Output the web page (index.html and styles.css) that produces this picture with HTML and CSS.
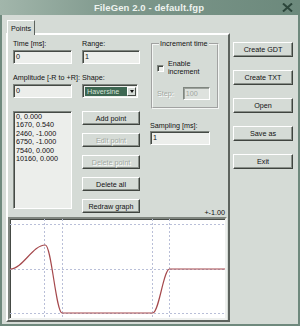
FILE: index.html
```html
<!DOCTYPE html>
<html lang="en">
<head>
  <meta charset="UTF-8" />
  <title>FileGen 2.0 - default.fgp</title>
  <link rel="stylesheet" href="styles.css">
</head>
<body>

<div class="window">
  <div class="titlebar">
    <span class="title">FileGen 2.0 - default.fgp</span>
    <svg class="close" width="11" height="9" viewBox="0 0 11 9">
      <path d="M1 0.5 L10 8.5 M10 0.5 L1 8.5" stroke="#2c463b" stroke-width="2" fill="none" />
    </svg>
  </div>

  <div class="client">
    <div class="tabs">
      <div class="tab">Points</div>
      <div class="panel">
        <div class="form">
          <div class="col">
            <label>Time [ms]:</label>
            <div class="edit">0</div>
            <label class="next">Amplitude [-R to +R]:</label>
            <div class="edit">0</div>
            <div class="list">
              <div>0, 0.000</div>
              <div>1670, 0.540</div>
              <div>2460, -1.000</div>
              <div>6750, -1.000</div>
              <div>7540, 0.000</div>
              <div>10160, 0.000</div>
            </div>
          </div>

          <div class="col">
            <label>Range:</label>
            <div class="edit">1</div>
            <label class="next">Shape:</label>
            <div class="combo">
              <span class="combo-value">Haversine</span>
              <span class="combo-arrow"></span>
            </div>
            <div class="actions">
              <button class="btn">Add point</button>
              <button class="btn" disabled>Edit point</button>
              <button class="btn" disabled>Delete point</button>
              <button class="btn">Delete all</button>
              <button class="btn">Redraw graph</button>
            </div>
          </div>

          <div class="col col-right">
            <fieldset class="group">
              <legend>Increment time</legend>
              <div class="check-row">
                <span class="check"></span>
                <span class="check-label">Enable<br>increment</span>
              </div>
              <div class="step-row">
                <span class="muted">Step:</span>
                <div class="edit edit-off">100</div>
              </div>
            </fieldset>
            <label class="sampling">Sampling [ms]:</label>
            <div class="edit edit-wide">1</div>
            <div class="scale">+-1.00</div>
          </div>
        </div>

        <div class="graph">
          <svg width="215" height="99" viewBox="0 0 215 99">
            <g stroke="#b9bfd8" stroke-width="1" stroke-dasharray="2 2" fill="none">
              <path d="M0 5.5 H215 M0 50.5 H215 M0 94.5 H215" />
              <path d="M34.5 0 V99 M52.5 0 V99 M142.5 0 V99 M159.5 0 V99" />
            </g>
            <path d="M0 50 C12.9 50 22.4 26 35.3 26 C41.4 26 46 94 52.1 94 L142.8 94 C148.9 94 153.5 50 159.6 50 L215 50"
                  stroke="#a5484c" stroke-width="1.2" fill="none" />
          </svg>
        </div>
      </div>
    </div>

    <div class="side">
      <button class="btn">Create GDT</button>
      <button class="btn">Create TXT</button>
      <button class="btn">Open</button>
      <button class="btn">Save as</button>
      <button class="btn">Exit</button>
    </div>
  </div>
</div>

</body>
</html>
```

FILE: styles.css
```css
html, body {
  margin: 0;
  background: #d5dbd6;
}
body {
  font-family: 'Liberation Sans', Arial, sans-serif;
  font-size: 7.2px;
  color: #111;
}
.window {
  width: 300px;
  height: 326px;
  box-sizing: border-box;
  background: #d5dbd6;
  border: 2px solid #6f897d;
  border-top: none;
  display: flex;
  flex-direction: column;
}
.titlebar {
  height: 15px;
  margin: 0 -2px;
  display: flex;
  align-items: center;
  padding: 0 7px 0 16px;
  background: linear-gradient(to right, #a2b6ab, #7d978b 40%, #6c897c);
  color: #eef3ef;
}
.title {
  flex: 1;
  text-align: center;
  font-weight: bold;
  font-size: 9.5px;
  letter-spacing: 0.1px;
}
.close { display: block; }

.client {
  flex: 1;
  display: flex;
  padding: 5px 0 0 4px;
}
.tabs {
  width: 224px;
  display: flex;
  flex-direction: column;
}
.tab {
  align-self: flex-start;
  position: relative;
  z-index: 1;
  margin: 0 0 -2px 1px;
  height: 15px;
  width: 28px;
  box-sizing: border-box;
  padding-top: 3px;
  text-align: center;
  background: #d5dbd6;
  border-top: 1px solid #fff;
  border-left: 1px solid #fff;
  border-right: 1px solid #5d635e;
}
.panel {
  height: 289px;
  box-sizing: border-box;
  border: 2px solid;
  border-color: #fff #5d635e #5d635e #fff;
  display: flex;
  flex-direction: column;
}

.form {
  display: grid;
  grid-template-columns: 59px 58px 1fr;
  column-gap: 10px;
  padding: 4px 0 0 5px;
}
.col {
  display: flex;
  flex-direction: column;
}
label, .scale, legend {
  display: block;
  line-height: 9px;
  height: 9px;
  white-space: nowrap;
}
.next { margin-top: 9px; }

.edit {
  height: 14px;
  margin-top: 2px;
  box-sizing: border-box;
  padding: 1px 0 0 2px;
  line-height: 10px;
  background: #eceeeb;
  border: 1px solid;
  border-color: #7f857f #fff #fff #7f857f;
  box-shadow: inset 1px 1px #454a45;
}
.edit-off {
  width: 27px;
  height: 13px;
  margin: 0;
  background: #dee2de;
  color: #a0a6a0;
  box-shadow: inset 1px 1px #9ba19b;
}
.edit-wide {
  width: 60px;
  margin-top: 1px;
}

.list {
  margin-top: 13px;
  height: 98px;
  box-sizing: border-box;
  padding: 1px 0 0 2px;
  line-height: 8.4px;
  background: #eceeeb;
  border: 1px solid;
  border-color: #7f857f #fff #fff #7f857f;
  box-shadow: inset 1px 1px #454a45;
}

.combo {
  width: 56px;
  height: 14px;
  margin-top: 2px;
  box-sizing: border-box;
  display: flex;
  padding: 2px 1px 1px 2px;
  background: #eceeeb;
  border: 1px solid;
  border-color: #7f857f #fff #fff #7f857f;
  box-shadow: inset 1px 1px #454a45;
}
.combo-value {
  flex: 1;
  background: #3d6752;
  color: #d4e3d8;
  line-height: 9px;
  padding-left: 2px;
}
.combo-arrow {
  width: 9px;
  box-sizing: border-box;
  background: #d5dbd6;
  border: 1px solid;
  border-color: #fff #454a45 #454a45 #fff;
  display: flex;
  align-items: center;
  justify-content: center;
}
.combo-arrow::after {
  content: '';
  border-left: 2.5px solid transparent;
  border-right: 2.5px solid transparent;
  border-top: 3px solid #111;
}

.btn {
  display: block;
  height: 14px;
  padding: 0;
  margin: 0;
  font: inherit;
  color: #111;
  line-height: 11px;
  background: #d5dbd6;
  border: 1px solid;
  border-color: #fff #3f443f #3f443f #fff;
  box-shadow: inset -1px -1px #8a908a;
}
.btn:disabled {
  color: #a2a8a2;
  text-shadow: 1px 1px #fff;
}
.actions {
  margin-top: 13px;
  display: flex;
  flex-direction: column;
  gap: 8px;
}

.col-right {
  margin-bottom: -4px;
  padding-right: 3px;
}
.group {
  width: 68px;
  box-sizing: border-box;
  margin: 0 0 0 1px;
  padding: 12px 0 7px 4px;
  border: 2px groove #f4f6f4;
}
legend {
  padding: 0 1px;
  margin-left: 2px;
}
.check-row {
  display: flex;
  align-items: center;
  gap: 4px;
}
.check {
  width: 7px;
  height: 7px;
  box-sizing: border-box;
  background: #eceeeb;
  border: 1px solid;
  border-color: #7f857f #fff #fff #7f857f;
  box-shadow: inset 1px 1px #454a45;
}
.check-label { line-height: 8px; }
.step-row {
  display: flex;
  align-items: center;
  gap: 9px;
  margin-top: 11px;
}
.muted {
  color: #a2a8a2;
  text-shadow: 1px 1px #fff;
}
.sampling { margin-top: 12px; }
.scale {
  margin-top: auto;
  text-align: right;
}

.graph {
  margin-top: 4px;
  width: 219px;
  height: 103px;
  box-sizing: border-box;
  background: #fff;
  border: 2px solid;
  border-color: #7f857f #eef0ee #eef0ee #7f857f;
  box-shadow: inset 1px 1px #454a45;
}
.graph svg { display: block; }

.side {
  width: 60px;
  margin-left: 3px;
  padding-top: 22px;
  display: flex;
  flex-direction: column;
  gap: 13px;
}
.side .btn { height: 15px; }
```
